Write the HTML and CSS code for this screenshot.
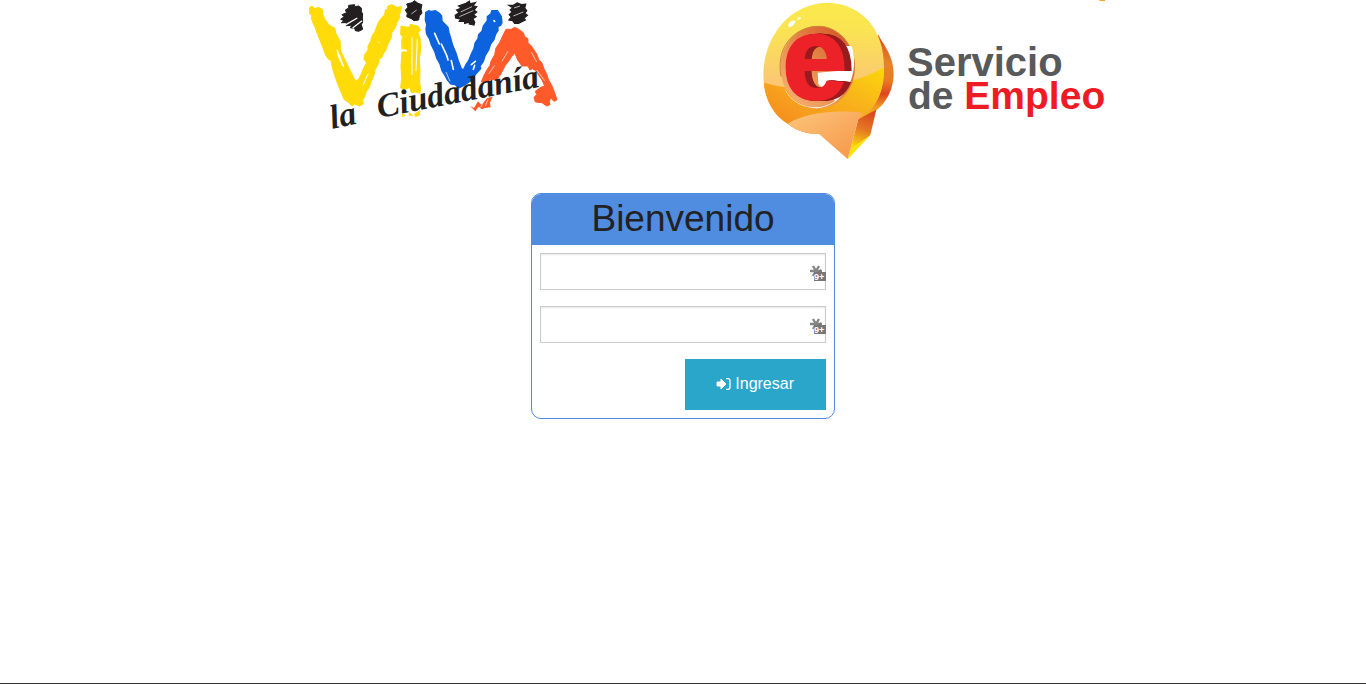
FILE: index.html
```html
<!DOCTYPE html>
<html lang="es">
<head>
<meta charset="utf-8">
<meta name="viewport" content="width=device-width, initial-scale=1">
<title>Bienvenido</title>
<link rel="stylesheet" href="styles.css">
</head>
<body>
<header class="brands">
  <div class="brand">
    <svg class="logo-viva" viewBox="308 0 250 132" role="img" aria-label="Viva la Ciudadanía">
      <!-- Brush marks, left half -->
      <g transform="translate(300 0) scale(.3333)">
        <g fill="#ffdb0a" stroke="#ffdb0a" stroke-width="3">
          <path d="M29 22 36 18 44 26 54 22 67 28 68 42 75 58 87 75 105 85 107 98 112 108 121 125 121 150 133 175 145 200 156 222 166 243 176 238 184 222 190 206 200 188 192 178 193 166 204 150 204 138 212 124 216 108 224 96 230 80 236 66 244 54 254 44 256 30 262 28 264 18 276 14 290 22 304 20 302 34 298 46 300 52 292 66 286 82 276 98 273 116 264 132 258 150 250 162 246 172 238 178 236 190 226 208 222 226 213 246 208 262 198 276 194 292 188 300 190 312 178 318 164 312 156 318 144 306 132 298 126 282 118 264 110 244 104 226 98 206 93 182 84 176 77 166 70 146 62 126 54 106 46 84 38 66 34 54 36 48 29 40Z"/>
          <path d="M303 78 312 80 328 82 332 72 342 76 354 78 362 90 354 98 360 114 362 152 358 176 360 212 359 252 362 262 360 280 348 276 334 278 330 262 316 268 302 264 305 236 303 198 306 156 322 156 322 148 306 146 305 122 308 110 302 104Z"/>
          <path d="M308 342 316 346 308 350ZM328 338 338 346 328 346ZM344 342 360 332 358 346 346 350Z"/>
        </g>
        <g stroke="#fff" fill="none" stroke-linecap="round">
          <path stroke-width="5" d="M112 152 116 168 122 182 130 198M118 166 126 190"/>
          <path stroke-width="3" d="M204 222 190 254M336 114 336 224M352 118 348 212M236 126 238 128"/>
        </g>
        <g fill="#231f20" stroke="#231f20" stroke-width="3">
          <path d="M122 58 132 50 126 44 140 38 136 30 146 24 146 16 164 14 164 20 176 18 184 24 184 34 188 42 187 54 188 66 184 74 188 88 176 94 166 92 164 84 152 84 154 76 138 77 140 68 124 68 132 62Z"/>
          <path d="M316 30 324 22 320 12 336 8 344 2 354 10 366 14 363 28 366 40 358 48 356 60 342 62 334 56 320 50 322 40Z"/>
        </g>
        <path stroke="#fff" stroke-width="4" d="M134 76 172 54M158 84 186 62"/>
        <path stroke="#fff" stroke-width="2" d="M334 42 350 30"/>
      </g>
      <!-- Brush marks, right half -->
      <g transform="translate(420 0) scale(.3333)">
        <path fill="#0d62dd" stroke="#0d62dd" stroke-width="4" d="M17 38 26 32 34 34 46 32 58 40 65 48 66 64 84 82 87 98 92 114 98 136 108 160 115 182 124 206 130 210 138 194 146 182 153 164 162 146 165 130 174 116 176 104 186 94 190 78 202 62 202 50 212 42 216 32 232 32 238 40 244 50 246 68 242 76 234 80 234 92 227 102 222 118 212 132 206 150 196 166 190 184 180 198 182 206 166 224 156 240 144 248 132 256 116 264 106 254 92 252 82 240 76 228 66 212 60 192 50 174 44 154 34 134 28 116 20 102 18 88 20 74 16 60Z"/>
        <path fill="#ff5a2a" stroke="#ff5a2a" stroke-width="3" d="M258 88 274 88 284 82 296 88 310 98 314 110 324 116 324 128 334 138 342 150 350 162 356 178 366 190 372 206 380 222 386 240 396 258 404 278 411 300 402 304 392 294 388 304 390 314 380 318 366 308 346 306 342 292 350 284 346 274 362 262 374 258 366 240 356 226 350 214 338 206 330 210 324 198 306 198 293 180 285 160 276 168 266 184 256 196 248 212 240 226 230 240 216 238 198 244 184 246 192 226 202 208 210 196 213 184 224 164 228 144 240 126 248 108Z"/>
        <path fill="#ff5a2a" d="M150 318 162 324 174 304 184 314 202 294 218 290 210 308 212 322 194 324 186 328 176 320 166 334Z"/>
        <path stroke="#fff" stroke-width="5" stroke-linecap="round" fill="none" d="M44 100 58 132M64 132 80 166 84 180M154 194 166 184M160 208 164 196M94 182 100 208M222 62 224 64"/>
        <path stroke="#fff" stroke-width="2" fill="none" d="M78 216 90 244M264 154 246 184M334 156 350 186M224 196 206 222M350 210 374 242M192 302 182 322M204 298 196 318"/>
        <g fill="#231f20" stroke="#231f20" stroke-width="4">
          <path d="M106 46 118 38 110 30 124 24 116 18 138 10 148 4 150 12 166 8 158 18 170 20 162 30 170 36 160 44 168 50 158 56 164 66 162 75 148 72 148 66 134 70 134 64 118 64 122 57 107 54Z"/>
          <path d="M267 16 280 16 292 9 304 14 317 13 314 24 320 32 314 40 322 46 312 54 316 60 304 66 296 70 284 70 278 62 267 60 274 51 268 44 277 36 271 30 278 23Z"/>
        </g>
        <path stroke="#fff" stroke-width="2" d="M122 36 156 20M118 50 160 32M282 24 300 18M280 48 310 36"/>
      </g>
      <g class="viva-script">
        <text transform="translate(332 129) rotate(-12)">la</text>
        <text transform="translate(379 118) rotate(-11)">Ciudadanía</text>
      </g>
    </svg>
  </div>
  <div class="brand">
    <svg class="logo-empleo" viewBox="761 0 344 160" role="img" aria-label="Servicio de Empleo">
      <defs>
        <linearGradient id="face" x1="0" y1="0" x2="0" y2="1">
          <stop offset="0" stop-color="#fbe94b"/><stop offset=".2" stop-color="#fae452"/><stop offset=".65" stop-color="#fbc576"/><stop offset="1" stop-color="#fbc36f"/>
        </linearGradient>
        <linearGradient id="low" x1="1" y1="0" x2="0" y2="1">
          <stop offset="0" stop-color="#fbd80c"/><stop offset=".4" stop-color="#f8b11c"/><stop offset="1" stop-color="#f58220"/>
        </linearGradient>
        <linearGradient id="tail" x1="0" y1="0" x2="1" y2="1">
          <stop offset="0" stop-color="#fbc67b"/><stop offset="1" stop-color="#f79447"/>
        </linearGradient>
        <linearGradient id="rim" x1="0" y1="0" x2="0" y2="1">
          <stop offset="0" stop-color="#d9521f"/><stop offset=".35" stop-color="#e4862b"/><stop offset=".55" stop-color="#e87a26"/><stop offset=".7" stop-color="#df4522"/><stop offset=".85" stop-color="#ee9a20"/><stop offset="1" stop-color="#f4b51a"/>
        </linearGradient>
        <linearGradient id="fold" x1=".6" y1="0" x2=".4" y2="1">
          <stop offset="0" stop-color="#d9481f"/><stop offset=".4" stop-color="#e67823"/><stop offset=".8" stop-color="#fbd80c"/><stop offset="1" stop-color="#ffe600"/>
        </linearGradient>
        <linearGradient id="hole" x1="1" y1="0" x2="0" y2="1">
          <stop offset="0" stop-color="#d24a1d"/><stop offset=".5" stop-color="#e68a4b"/><stop offset="1" stop-color="#f9b878"/>
        </linearGradient>
      </defs>
      <path fill="#f8a51b" d="M1099 0h6v1h-5Z"/>
      <g transform="translate(755 0) scale(.3333)">
        <path fill="url(#rim)" d="M370 104C386 136 417 166 416 224C415 268 394 310 358 336L310 358 330 250Z"/>
        <path fill="url(#fold)" d="M310 357 364 329 346 405 278 477Z"/>
        <path fill="#ffe20b" d="M346 405 278 477 288 446Z"/>
        <path fill="url(#face)" d="M220 8C318 12 388 84 387 202C386 286 358 330 310 357L192 402C150 402 118 388 100 372C52 346 26 292 25 222C28 102 110 8 220 8Z"/>
        <path fill="url(#low)" d="M26 248C128 276 204 264 280 244C326 234 354 220 387 202C389 284 356 332 310 357L192 402C150 402 118 388 98 371C56 344 32 304 26 248Z"/>
        <path fill="url(#tail)" d="M98 371C150 340 230 328 324 338L310 357 278 477 192 402C150 402 120 388 98 371Z"/>
        <path fill="#fff" d="M100 80C98 70 108 60 120 62C124 66 116 78 104 82ZM126 58C128 52 136 48 138 54C136 58 130 60 126 58Z"/>
        <ellipse cx="188" cy="202" rx="112" ry="124" fill="url(#hole)"/>
        <path fill="none" stroke="#c9873b" stroke-width="3" d="M78 230C60 130 130 76 196 79C260 84 298 142 299 202"/>
        <path fill="#fff" d="M270 138 290 138C316 220 272 318 184 325C132 322 100 296 88 264C108 304 144 322 180 322C204 322 224 314 240 302L214 276 190 252 188 218 280 210Z"/>
      </g>
      <text class="emblem-letter" x="782" y="99">e</text>
      <g class="empleo-name">
        <text x="907" y="76">Servicio</text>
        <text class="empleo-second" x="908" y="109">de <tspan class="empleo-red">Empleo</tspan></text>
      </g>
    </svg>
  </div>
</header>
<main class="content">
  <form class="login">
    <h1 class="login-title">Bienvenido</h1>
    <div class="login-body">
      <div class="field">
        <input class="field-input" type="text" name="usuario" aria-label="Usuario">
        <svg class="field-key" viewBox="0 0 16 16" aria-hidden="true"><path stroke="#858585" stroke-width="2.4" d="M0 6h12M3 1l6 10M9 1 3 11"/><path fill="#777" d="M4 7h4l3-3v3h5v9H4Z"/><text class="key-count" x="4" y="15">9+</text></svg>
      </div>
      <div class="field">
        <input class="field-input" type="password" name="clave" aria-label="Contraseña">
        <svg class="field-key" viewBox="0 0 16 16" aria-hidden="true"><path stroke="#858585" stroke-width="2.4" d="M0 6h12M3 1l6 10M9 1 3 11"/><path fill="#777" d="M4 7h4l3-3v3h5v9H4Z"/><text class="key-count" x="4" y="15">9+</text></svg>
      </div>
      <button class="submit" type="submit">
        <svg class="submit-icon" viewBox="0 0 14 14" aria-hidden="true"><path fill="#fff" stroke="#fff" stroke-linejoin="round" d="M0 5h4V2l5 5-5 5V9H0Z"/><path fill="none" stroke="#fff" stroke-width="1.3" d="M9 1.7h2a2 2 0 0 1 2 2v6.6a2 2 0 0 1-2 2H9"/></svg>
        Ingresar
      </button>
    </div>
  </form>
</main>
<footer class="footer"></footer>
</body>
</html>
```
FILE: styles.css
```css
* { box-sizing: border-box; }

body {
  margin: 0;
  min-height: 100vh;
  display: flex;
  flex-direction: column;
  background: #fff;
  color: #222;
  font-family: "Liberation Sans", Arial, sans-serif;
}

.brands {
  width: 100%;
  max-width: 1000px;
  margin: 0 auto;
  display: grid;
  grid-template-columns: 1fr 1fr;
}

.brand {
  display: flex;
  justify-content: center;
  align-items: flex-start;
}

.logo-viva,
.logo-empleo {
  max-width: 100%;
  overflow: visible;
}

.logo-viva { width: 250px; }
.logo-empleo { width: 344px; }

.viva-script {
  fill: #231f20;
  font: italic bold 34px "Liberation Serif", serif;
}

.emblem-letter {
  fill: #ed2228;
  stroke: #ed2228;
  stroke-width: 2px;
  font: bold 118px "Liberation Sans", sans-serif;
  filter: drop-shadow(2px 0 0 #981b1e) drop-shadow(2px 0 0 #981b1e) drop-shadow(3px 0 0 #981b1e);
}

.empleo-name {
  fill: #58595b;
  font: bold 40px "Liberation Sans", sans-serif;
}

.empleo-second { font-size: 39px; }
.empleo-red { fill: #ed1c24; }

.content {
  flex: 1;
  padding: 33px 16px;
}

.login {
  max-width: 304px;
  margin: 0 auto;
  border: 1px solid #508ce0;
  border-radius: 10px;
  overflow: hidden;
}

.login-title {
  margin: 0;
  padding: 0 8px 2px;
  background: #508ce0;
  font-size: 37px;
  font-weight: 400;
  line-height: 49px;
  text-align: center;
}

.login-body {
  display: flex;
  flex-direction: column;
  gap: 16px;
  padding: 8px;
}

.field {
  position: relative;
  display: flex;
}

.field-input {
  width: 100%;
  height: 37px;
  padding: 8px 24px 8px 8px;
  border: 1px solid #ccc;
  border-radius: 0;
  box-shadow: inset 0 1px 2px rgba(0, 0, 0, .1);
  background: #fff;
  font: inherit;
}

.field-key {
  position: absolute;
  right: 0;
  top: 12px;
  width: 16px;
  height: 16px;
}

.key-count {
  fill: #fff;
  font: bold 9px "Liberation Sans", sans-serif;
}

.submit {
  align-self: flex-end;
  display: flex;
  align-items: center;
  gap: 4px;
  padding: 15px 32px 17px;
  border: 0;
  background: #2ba6cb;
  color: #fff;
  font: 16px/19px "Liberation Sans", Arial, sans-serif;
}

.submit-icon {
  width: 14px;
  height: 14px;
  overflow: visible;
}

.footer { border-top: 1px solid #333; }
```
